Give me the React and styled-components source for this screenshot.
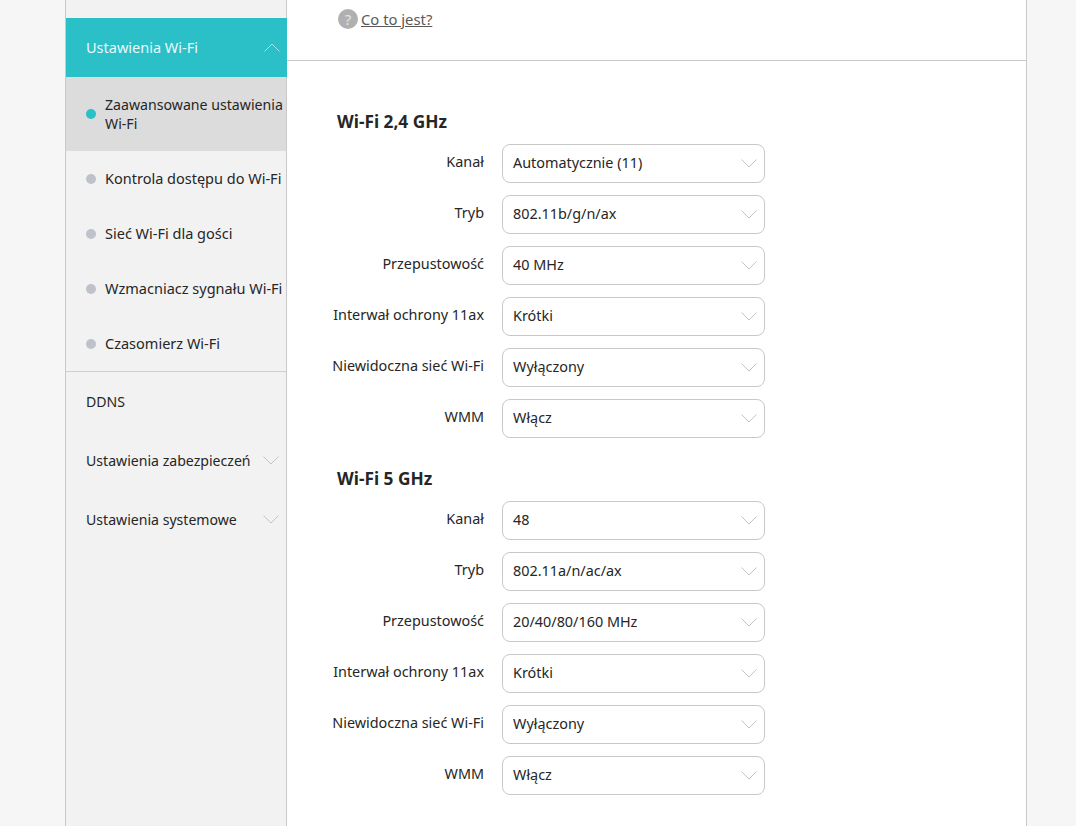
import React from "react";
import styled, { createGlobalStyle } from "styled-components";

const wifi24 = [
  ["Kanał", "Automatycznie (11)"],
  ["Tryb", "802.11b/g/n/ax"],
  ["Przepustowość", "40 MHz"],
  ["Interwał ochrony 11ax", "Krótki"],
  ["Niewidoczna sieć Wi-Fi", "Wyłączony"],
  ["WMM", "Włącz"],
];

const wifi5 = [
  ["Kanał", "48"],
  ["Tryb", "802.11a/n/ac/ax"],
  ["Przepustowość", "20/40/80/160 MHz"],
  ["Interwał ochrony 11ax", "Krótki"],
  ["Niewidoczna sieć Wi-Fi", "Wyłączony"],
  ["WMM", "Włącz"],
];

const subItems = [
  "Kontrola dostępu do Wi-Fi",
  "Sieć Wi-Fi dla gości",
  "Wzmacniacz sygnału Wi-Fi",
  "Czasomierz Wi-Fi",
];

const Chevron = ({ up, color = "#c4c4c4" }) => (
  <svg width="16" height="9" viewBox="0 0 16 9" fill="none">
    <path
      d={up ? "M0.5 8.5L8 1L15.5 8.5" : "M0.5 0.5L8 8L15.5 0.5"}
      stroke={color}
      strokeWidth="1"
    />
  </svg>
);

const Section = ({ title, rows }) => (
  <FormSection>
    <SectionTitle>{title}</SectionTitle>
    {rows.map(([label, value]) => (
      <FormRow key={label}>
        <FormLabel>{label}</FormLabel>
        <SelectBox>
          <RaisedText>{value}</RaisedText>
          <Chevron />
        </SelectBox>
      </FormRow>
    ))}
  </FormSection>
);

const App = () => {
  return (
    <Page>
      <GlobalStyle />
      <Shell>
        <Sidebar>
          <MenuHeader>
            <RaisedText>Ustawienia Wi-Fi</RaisedText>
            <Chevron up color="#9fe3e6" />
          </MenuHeader>
          <ActiveSubItem>
            <Dot $active />
            <SubText>
              Zaawansowane ustawienia
              <br />
              Wi-Fi
            </SubText>
          </ActiveSubItem>
          {subItems.map((item) => (
            <SubItem key={item}>
              <Dot />
              <SubText>{item}</SubText>
            </SubItem>
          ))}
          <MenuGroup>
            <MenuItem>DDNS</MenuItem>
            <MenuItem>
              <span>Ustawienia zabezpieczeń</span>
              <Chevron />
            </MenuItem>
            <MenuItem>
              <span>Ustawienia systemowe</span>
              <Chevron />
            </MenuItem>
          </MenuGroup>
        </Sidebar>
        <Main>
          <TopBlock>
            <HelpIcon>?</HelpIcon>
            <HelpLink>Co to jest?</HelpLink>
          </TopBlock>
          <Content>
            <Section title="Wi-Fi 2,4 GHz" rows={wifi24} />
            <Section title="Wi-Fi 5 GHz" rows={wifi5} />
          </Content>
        </Main>
      </Shell>
    </Page>
  );
};

const GlobalStyle = createGlobalStyle`
  html, body {
    margin: 0;
    padding: 0;
    height: 826px;
    overflow: hidden;
    background: #f6f6f6;
    font-family: "Noto Sans", "Open Sans", sans-serif;
    color: #262626;
  }
`;

const Page = styled.div`
  height: 826px;
  padding-left: 65px;
`;

const Shell = styled.div`
  width: 962px;
  height: 826px;
  display: flex;
  background: #fff;
  border-left: 1px solid #c9c9c9;
  border-right: 1px solid #c9c9c9;
  box-sizing: border-box;
`;

const Sidebar = styled.div`
  width: 221px;
  flex-shrink: 0;
  padding-top: 18px;
  box-sizing: border-box;
  background: #f2f2f2;
  border-right: 1px solid #c9c9c9;
  font-size: 14.5px;
`;

const RaisedText = styled.span`
  margin-top: -2px;
`;

const MenuHeader = styled.div`
  height: 59px;
  margin-right: -1px;
  padding: 0 7px 0 20px;
  display: flex;
  align-items: center;
  justify-content: space-between;
  background: #2bbfc8;
  color: #eafafa;
`;

const SubItem = styled.div`
  height: 55px;
  padding-left: 20px;
  display: flex;
  align-items: center;
  white-space: nowrap;
`;

const ActiveSubItem = styled(SubItem)`
  height: 74px;
  background: #dcdcdc;
  font-size: 14.15px;
`;

const Dot = styled.i`
  width: 10px;
  height: 10px;
  flex-shrink: 0;
  border-radius: 50%;
  background: ${(p) => (p.$active ? "#2bbfc8" : "#bfc1cb")};
`;

const SubText = styled.span`
  margin-left: 9px;
  line-height: 19px;
`;

const MenuGroup = styled.div`
  border-top: 1px solid #cfcfcf;
`;

const MenuItem = styled.div`
  height: 59px;
  padding: 0 7px 0 20px;
  display: flex;
  align-items: center;
  justify-content: space-between;
  font-size: 14.1px;
`;

const Main = styled.div`
  flex: 1;
  min-width: 0;
`;

const TopBlock = styled.div`
  height: 61px;
  padding: 0 0 22px 51px;
  box-sizing: border-box;
  border-bottom: 1px solid #c9c9c9;
  display: flex;
  align-items: center;
  gap: 3px;
`;

const HelpIcon = styled.span`
  width: 20px;
  height: 20px;
  border-radius: 50%;
  background: #b0b0b0;
  color: #e4e4e4;
  font-size: 15px;
  line-height: 20px;
  text-align: center;
`;

const HelpLink = styled.a`
  font-size: 14.8px;
  color: #595959;
  text-decoration: underline;
`;

const Content = styled.div`
  padding-top: 51px;
  display: flex;
  flex-direction: column;
  gap: 31px;
`;

const FormSection = styled.div`
  display: flex;
  flex-direction: column;
  gap: 12px;
`;

const SectionTitle = styled.h2`
  margin: 0 0 0 50px;
  font-size: 17.3px;
  line-height: 20px;
  font-weight: 700;
  color: #262626;
`;

const FormRow = styled.div`
  display: grid;
  grid-template-columns: 197px 263px;
  column-gap: 18px;
  align-items: center;
  font-size: 14.4px;
`;

const FormLabel = styled.label`
  text-align: right;
  white-space: nowrap;
  margin-top: -4px;
`;

const SelectBox = styled.div`
  height: 39px;
  padding: 0 7px 0 10px;
  box-sizing: border-box;
  display: flex;
  align-items: center;
  justify-content: space-between;
  background: #fff;
  border: 1px solid #c9c9c9;
  border-radius: 8px;
`;

export default App;
